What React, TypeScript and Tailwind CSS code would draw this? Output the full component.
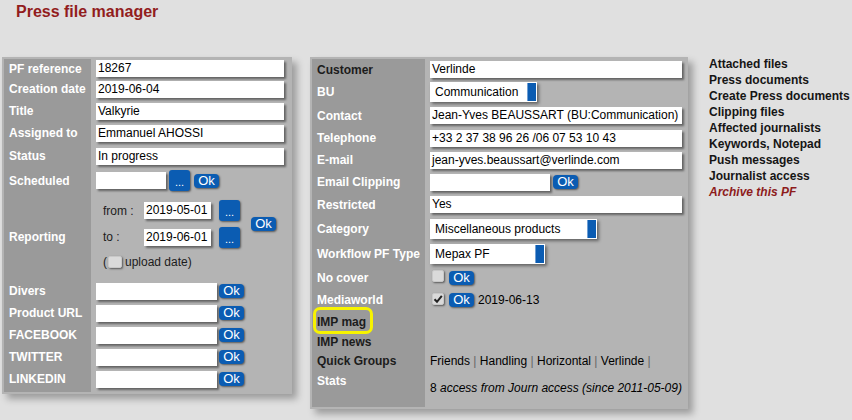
const BLUE = "bg-[#0b5cb2]";

function TextBox({ value = "", w }: { value?: string; w: string }) {
  return (
    <div
      className={`${w} h-[17px] bg-white pl-[2px] text-[12px] leading-[17px] text-black whitespace-nowrap overflow-hidden shadow-[2px_2px_2px_rgba(0,0,0,0.45)]`}
    >
      {value}
    </div>
  );
}

function OkBtn({ className = "" }: { className?: string }) {
  return (
    <div
      className={`${className} ${BLUE} w-[25px] h-[14px] rounded-[4px] text-white text-[13px] leading-[14px] text-center shadow-[1px_1px_2px_rgba(0,0,0,0.5)]`}
    >
      Ok
    </div>
  );
}

function DotsBtn({ className = "" }: { className?: string }) {
  return (
    <div
      className={`${className} ${BLUE} w-[21px] h-[21px] rounded-[3px] text-white text-[11px] leading-[11px] flex items-end justify-center pb-[3px] shadow-[1px_1px_2px_rgba(0,0,0,0.5)]`}
    >
      ...
    </div>
  );
}

function Select({ value, w }: { value: string; w: string }) {
  return (
    <div className={`${w} h-[20px] bg-white flex items-stretch shadow-[2px_2px_3px_rgba(0,0,0,0.45)]`}>
      <div className="flex-1 pl-[5px] text-[12px] leading-[20px] text-black whitespace-nowrap">{value}</div>
      <div className="w-[9px] my-[1px] mr-[1px] bg-[#0b5cb2] border-l border-[#6f9fd4]" />
    </div>
  );
}

function Check({ checked = false, className = "" }: { checked?: boolean; className?: string }) {
  return (
    <div
      className={`${className} w-[12px] h-[12px] rounded-[2px] bg-[#dadada] border border-[#c8c8c8] shadow-[1px_1px_2px_rgba(0,0,0,0.5)] flex items-center justify-center`}
    >
      {checked && (
        <svg width="10" height="10" viewBox="0 0 10 10">
          <path d="M1.5 5.2 L4 7.8 L8.8 1.8" fill="none" stroke="#222" strokeWidth="2" />
        </svg>
      )}
    </div>
  );
}

function Row({
  label,
  h,
  lw,
  dark = false,
  children,
}: {
  label?: React.ReactNode;
  h: string;
  lw: string;
  dark?: boolean;
  children?: React.ReactNode;
}) {
  return (
    <div className={`flex ${h}`}>
      <div
        className={`${lw} bg-[#9a9a9a] pl-[5px] flex items-center font-bold text-[12px] leading-[14px] whitespace-nowrap ${
          dark ? "text-[#1c1c1c]" : "text-white"
        }`}
      >
        {label}
      </div>
      <div className="flex-1 pl-[5px] flex items-center">{children}</div>
    </div>
  );
}

const L = "w-[87px]";
const R = "w-[113px]";

export default function App() {
  return (
    <div className="w-full min-h-screen bg-[#e0e0e0] font-['Liberation_Sans',Arial,sans-serif] text-black">
      <h1 className="pl-[16px] pt-[3px] text-[16px] leading-[18px] font-bold text-[#921d1d]">
        Press file manager
      </h1>

      <div className="flex items-start mt-[36px] pl-[2px]">
        {/* LEFT PANEL */}
        <div className="w-[290px] bg-[#b4b4b4] p-[2px] shadow-[5px_5px_7px_rgba(0,0,0,0.3)]">
          <Row label="PF reference" h="h-[19px]" lw={L}>
            <TextBox value="18267" w="w-[188px]" />
          </Row>
          <Row label="Creation date" h="h-[22px]" lw={L}>
            <TextBox value="2019-06-04" w="w-[188px]" />
          </Row>
          <Row label="Title" h="h-[22px]" lw={L}>
            <TextBox value="Valkyrie" w="w-[188px]" />
          </Row>
          <Row label="Assigned to" h="h-[22px]" lw={L}>
            <TextBox value="Emmanuel AHOSSI" w="w-[188px]" />
          </Row>
          <Row label="Status" h="h-[24px]" lw={L}>
            <TextBox value="In progress" w="w-[188px]" />
          </Row>
          <Row label="Scheduled" h="h-[25px]" lw={L}>
            <TextBox w="w-[70px]" />
            <DotsBtn className="ml-[3px]" />
            <OkBtn className="ml-[4px]" />
          </Row>

          {/* Reporting block */}
          <div className="flex h-[87px]">
            <div className={`${L} bg-[#9a9a9a] pl-[5px] flex items-center font-bold text-[12px] text-white`}>
              Reporting
            </div>
            <div className="flex-1 pl-[12px] pt-[6px] flex flex-col text-[12px] text-[#1c1c1c]">
              <div className="flex items-center">
                <div className="flex flex-col gap-[4px]">
                  <div className="flex items-center h-[23px]">
                    <span className="w-[41px]">from :</span>
                    <TextBox value="2019-05-01" w="w-[67px]" />
                    <DotsBtn className="ml-[8px]" />
                  </div>
                  <div className="flex items-center h-[22px]">
                    <span className="w-[41px]">to :</span>
                    <TextBox value="2019-06-01" w="w-[67px]" />
                    <DotsBtn className="ml-[8px]" />
                  </div>
                </div>
                <OkBtn className="ml-[11px]" />
              </div>
              <div className="flex items-center h-[20px] mt-[4px]">
                <span>(</span>
                <Check className="ml-[1px] w-[14px]" />
                <span className="ml-[3px]">upload date)</span>
              </div>
            </div>
          </div>

          {["Divers", "Product URL", "FACEBOOK", "TWITTER", "LINKEDIN"].map((l) => (
            <Row key={l} label={l} h="h-[22px]" lw={L}>
              <TextBox w="w-[121px]" />
              <OkBtn className="ml-[2px]" />
            </Row>
          ))}
          <Row h="h-[2px]" lw={L} />
        </div>

        {/* RIGHT PANEL */}
        <div className="ml-[18px] w-[378px] bg-[#b4b4b4] p-[2px] shadow-[5px_5px_7px_rgba(0,0,0,0.3)]">
          <Row label="Customer" h="h-[21px]" lw={R} dark>
            <TextBox value="Verlinde" w="w-[252px]" />
          </Row>
          <Row label="BU" h="h-[24px]" lw={R}>
            <Select value="Communication" w="w-[107px]" />
          </Row>
          <Row label="Contact" h="h-[23px]" lw={R}>
            <TextBox value="Jean-Yves BEAUSSART (BU:Communication)" w="w-[252px]" />
          </Row>
          <Row label="Telephone" h="h-[22px]" lw={R}>
            <TextBox value="+33 2 37 38 96 26 /06 07 53 10 43" w="w-[252px]" />
          </Row>
          <Row label="E-mail" h="h-[22px]" lw={R}>
            <TextBox value="jean-yves.beaussart@verlinde.com" w="w-[252px]" />
          </Row>
          <Row label="Email Clipping" h="h-[22px]" lw={R}>
            <TextBox w="w-[120px]" />
            <OkBtn className="ml-[3px]" />
          </Row>
          <Row label="Restricted" h="h-[23px]" lw={R}>
            <TextBox value="Yes" w="w-[252px]" />
          </Row>
          <Row label="Category" h="h-[25px]" lw={R}>
            <Select value="Miscellaneous products" w="w-[167px]" />
          </Row>
          <Row label="Workflow PF Type" h="h-[25px]" lw={R}>
            <Select value="Mepax PF" w="w-[115px]" />
          </Row>
          <Row label="No cover" h="h-[23px]" lw={R}>
            <Check className="ml-[2px] -mt-[3px]" />
            <OkBtn className="ml-[5px]" />
          </Row>
          <Row label="Mediaworld" h="h-[22px]" lw={R}>
            <Check checked className="ml-[2px] -mt-[3px]" />
            <OkBtn className="ml-[5px]" />
            <span className="ml-[4px] text-[12px]">2019-06-13</span>
          </Row>
          <Row
            label={
              <span className="relative">
                IMP mag
                <span className="absolute -left-[4px] -top-[8px] w-[60px] h-[27px] border-[3px] border-[#f7f300] rounded-[7px]" />
              </span>
            }
            h="h-[21px]"
            lw={R}
            dark
          />
          <Row label="IMP news" h="h-[19px]" lw={R} dark />
          <Row label="Quick Groups" h="h-[20px]" lw={R} dark>
            <span className="text-[12px] whitespace-nowrap">
              Friends <span className="text-[#666]">|</span> Handling <span className="text-[#666]">|</span>{" "}
              Horizontal <span className="text-[#666]">|</span> Verlinde <span className="text-[#666]">|</span>
            </span>
          </Row>
          <div className="flex h-[36px]">
            <div className={`${R} bg-[#9a9a9a] pl-[5px] pt-[3px] font-bold text-[12px] leading-[14px] text-white`}>
              Stats
            </div>
            <div className="flex-1 pl-[5px] pt-[10px] text-[12px] leading-[14px] whitespace-nowrap">
              8 <span className="italic">access from Journ access (since 2011-05-09)</span>
            </div>
          </div>
        </div>

        {/* LINKS */}
        <div className="ml-[21px] -mt-[1px] flex flex-col text-[12px] leading-[16px] font-bold text-[#151515] whitespace-nowrap">
          <span>Attached files</span>
          <span>Press documents</span>
          <span>Create Press documents</span>
          <span>Clipping files</span>
          <span>Affected journalists</span>
          <span>Keywords, Notepad</span>
          <span>Push messages</span>
          <span>Journalist access</span>
          <span className="italic text-[#8e1c1c]">Archive this PF</span>
        </div>
      </div>
    </div>
  );
}
